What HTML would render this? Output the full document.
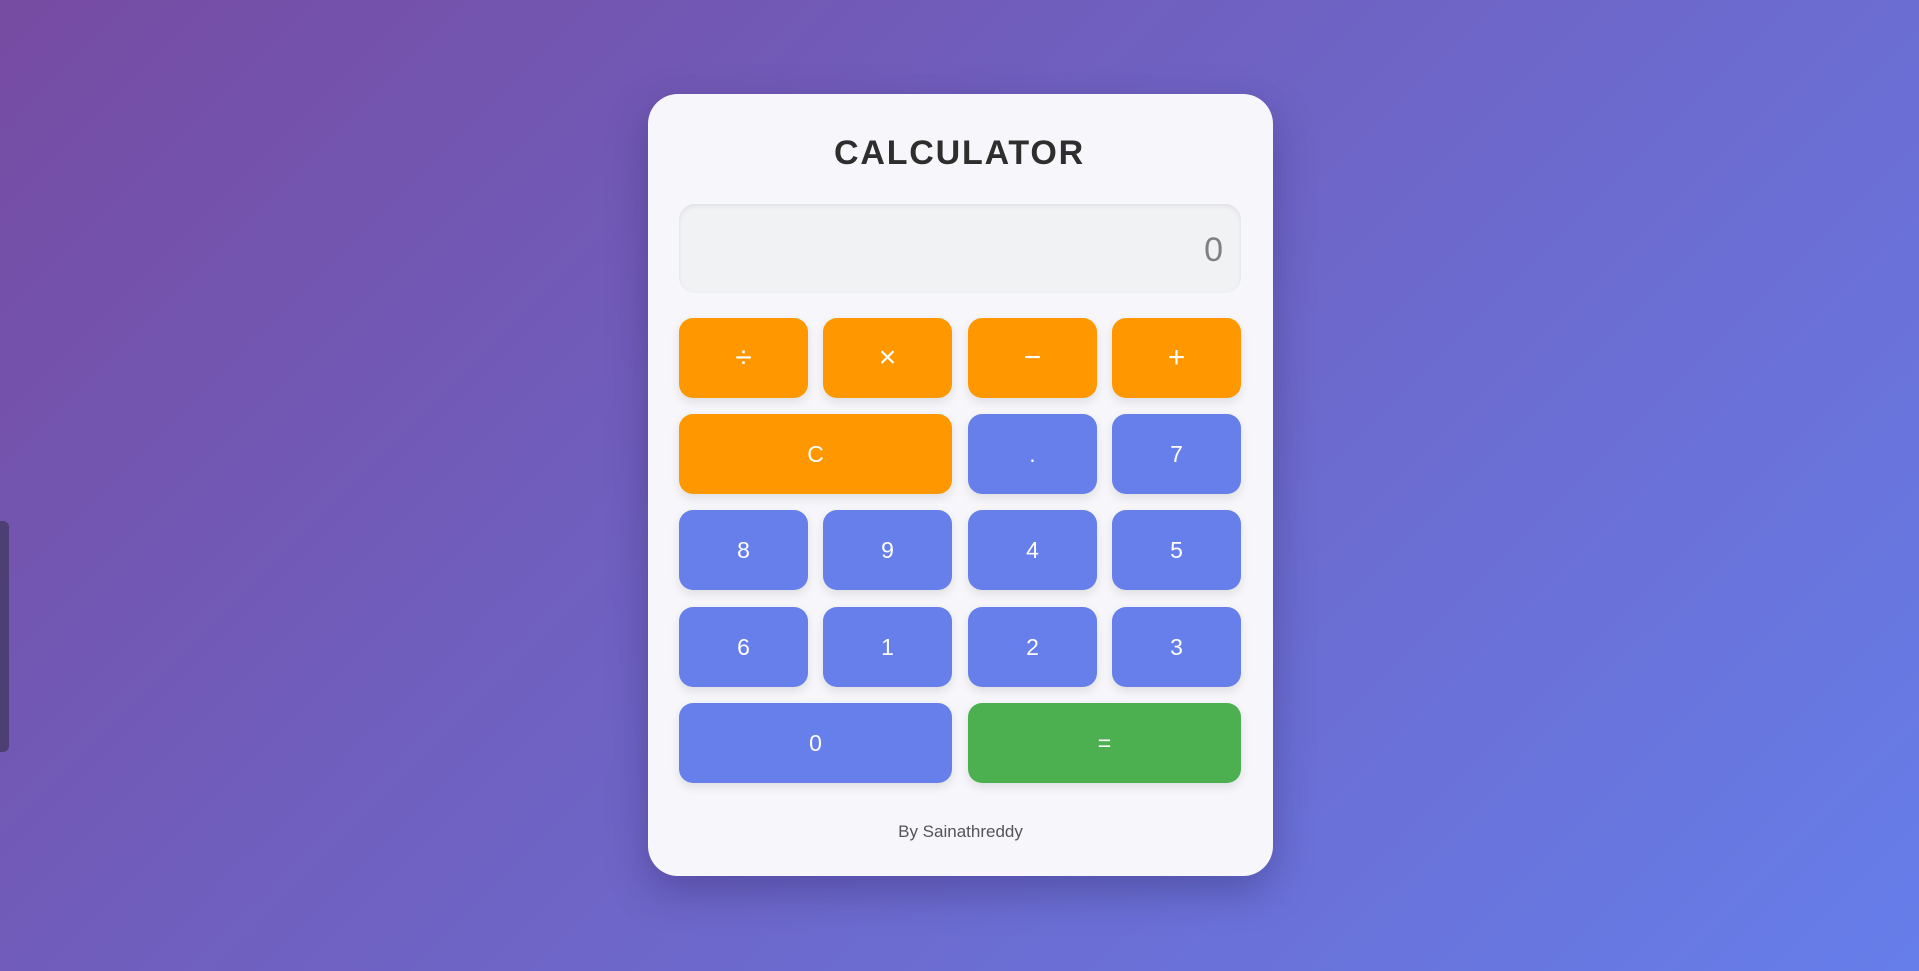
<!DOCTYPE html>
<html><head><meta charset="utf-8"><style>
*{box-sizing:border-box;margin:0;padding:0}
html,body{width:1919px;height:971px;overflow:hidden}
body{background:linear-gradient(135deg,#764ba2 0%,#667eea 100%);font-family:"Liberation Sans",sans-serif;position:relative}
.tab{position:absolute;left:-6px;top:521px;width:15px;height:231px;background:#4b3f73;border-radius:6px}
.card{position:absolute;left:648px;top:94px;width:625px;height:782px;background:#f7f7fb;border-radius:30px;box-shadow:0 15px 40px rgba(40,30,90,.35)}
h1{position:absolute;top:131px;left:0;width:100%;text-align:center;font-size:34px;font-weight:bold;letter-spacing:1.8px;color:#2e2e2e;line-height:44px}
.disp{position:absolute;left:679px;top:204px;width:562px;height:89px;background:#f1f2f4;border-radius:16px;box-shadow:inset 0 2px 5px rgba(0,0,0,.08);text-align:right;padding-right:18px;font-size:34px;line-height:92px;color:#808080}
.b{position:absolute;width:129px;height:80px;border-radius:14px;color:#fff;font-size:23px;display:flex;align-items:center;justify-content:center;box-shadow:0 4px 10px rgba(0,0,0,.1)}
.o{background:#ff9800}.u{background:#677fea}.g{background:#4caf50}
.w{width:273px}
.op{font-size:30px}
.f{position:absolute;top:822px;left:648px;width:625px;text-align:center;font-size:17px;color:#555}
</style></head><body>
<div class="tab"></div>
<div class="card"></div>
<h1 style="position:absolute">CALCULATOR</h1>
<div class="disp">0</div>
<div class="b o op" style="left:679px;top:318px">÷</div>
<div class="b o op" style="left:823px;top:318px">×</div>
<div class="b o op" style="left:968px;top:318px">−</div>
<div class="b o op" style="left:1112px;top:318px">+</div>
<div class="b o w" style="left:679px;top:414px">C</div>
<div class="b u" style="left:968px;top:414px">.</div>
<div class="b u" style="left:1112px;top:414px">7</div>
<div class="b u" style="left:679px;top:510px">8</div>
<div class="b u" style="left:823px;top:510px">9</div>
<div class="b u" style="left:968px;top:510px">4</div>
<div class="b u" style="left:1112px;top:510px">5</div>
<div class="b u" style="left:679px;top:607px">6</div>
<div class="b u" style="left:823px;top:607px">1</div>
<div class="b u" style="left:968px;top:607px">2</div>
<div class="b u" style="left:1112px;top:607px">3</div>
<div class="b u w" style="left:679px;top:703px">0</div>
<div class="b g w" style="left:968px;top:703px">=</div>
<div class="f">By Sainathreddy</div>
</body></html>
